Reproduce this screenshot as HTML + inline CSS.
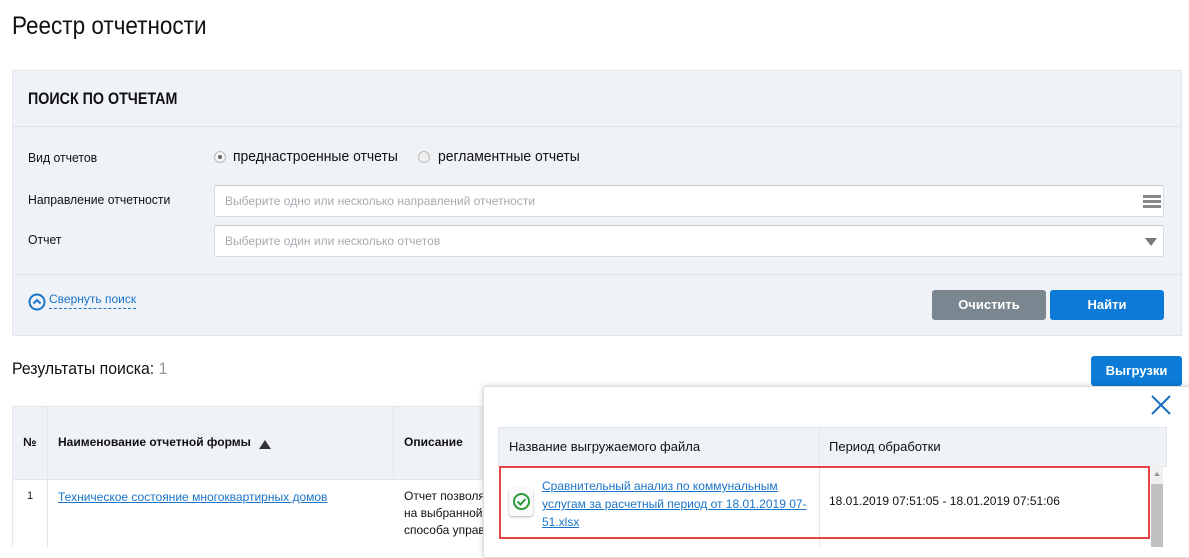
<!DOCTYPE html>
<html><head><meta charset="utf-8"><style>
body{margin:0;width:1189px;height:547px;overflow:hidden;background:#fff;font-family:"Liberation Sans",sans-serif;color:#111;position:relative}
.a{position:absolute}
.n{transform-origin:0 0;white-space:nowrap}
.t{font-size:13px;transform:scaleX(.94)}
.inp{position:absolute;left:214px;width:948px;height:30px;background:#fff;border:1px solid #d9dde3;border-top-color:#c4c8ce;border-radius:2px}
.ph{position:absolute;left:10px;top:8px;font-size:12px;color:#a6aab0}
.btn{position:absolute;color:#fff;font-size:13px;font-weight:bold;text-align:center;border-radius:3px}
</style></head><body>
<div class="a n" style="left:12px;top:12px;font-size:25px;transform:scaleX(.9)">Реестр отчетности</div>
<div class="a" style="left:12px;top:70px;width:1168px;height:264px;background:#eff2f7;border:1px solid #e2e6ec"></div>
<div class="a" style="left:13px;top:126px;width:1168px;height:1px;background:#dfe3e9"></div>
<div class="a" style="left:13px;top:274px;width:1168px;height:1px;background:#dfe3e9"></div>
<div class="a n" style="left:28px;top:89px;font-size:17px;font-weight:bold;transform:scaleX(.84)">ПОИСК ПО ОТЧЕТАМ</div>
<div class="a n t" style="left:28px;top:150px">Вид отчетов</div>
<div class="a" style="left:214px;top:151px;width:10px;height:10px;border:1px solid #bbb;border-radius:50%;background:#f4f4f4"><div style="position:absolute;left:3px;top:3px;width:4px;height:4px;border-radius:50%;background:#666"></div></div>
<div class="a n" style="left:233px;top:148px;font-size:15px;transform:scaleX(.93)">преднастроенные отчеты</div>
<div class="a" style="left:418px;top:151px;width:10px;height:10px;border:1px solid #bbb;border-radius:50%;background:#eee"></div>
<div class="a n" style="left:438px;top:148px;font-size:15px;transform:scaleX(.93)">регламентные отчеты</div>
<div class="a n t" style="left:28px;top:192px">Направление отчетности</div>
<div class="inp" style="top:185px"><div class="ph">Выберите одно или несколько направлений отчетности</div>
<div class="a" style="right:2px;top:9px;width:18px;height:3px;background:#888;box-shadow:0 5px 0 #888,0 10px 0 #888"></div></div>
<div class="a n t" style="left:28px;top:232px">Отчет</div>
<div class="inp" style="top:225px"><div class="ph">Выберите один или несколько отчетов</div>
<div class="a" style="right:6px;top:12px;border-left:6px solid transparent;border-right:6px solid transparent;border-top:8px solid #777"></div></div>
<svg class="a" style="left:28px;top:293px" width="18" height="18"><circle cx="9" cy="9" r="7.5" fill="none" stroke="#1a74c9" stroke-width="2"/><path d="M5.5 10.5 9 7 12.5 10.5" fill="none" stroke="#1a74c9" stroke-width="2"/></svg>
<div class="a" style="left:49px;top:292px;font-size:12px;color:#1a74c9;border-bottom:1px dashed #1a74c9;padding-bottom:2px">Свернуть поиск</div>
<div class="btn" style="left:932px;top:290px;width:114px;height:30px;line-height:30px;background:#7a8790">Очистить</div>
<div class="btn" style="left:1050px;top:290px;width:114px;height:30px;line-height:30px;background:#0b7bd7">Найти</div>
<div class="a n" style="left:12px;top:359px;font-size:17px;transform:scaleX(.93)">Результаты поиска: <span style="color:#999">1</span></div>
<div class="btn" style="left:1091px;top:356px;width:91px;height:30px;line-height:30px;background:#0b7bd7">Выгрузки</div>
<div class="a" style="left:12px;top:406px;width:480px;height:72px;background:#eff2f7;border:1px solid #e2e6ec"></div>
<div class="a" style="left:47px;top:406px;width:1px;height:141px;background:#e2e6ec"></div>
<div class="a" style="left:393px;top:406px;width:1px;height:72px;background:#e2e6ec"></div>
<div class="a" style="left:12px;top:478px;width:1px;height:69px;background:#e2e6ec"></div>
<div class="a" style="left:23px;top:435px;font-size:12px;font-weight:bold">№</div>
<div class="a" style="left:58px;top:435px;font-size:12px;font-weight:bold">Наименование отчетной формы</div>
<div class="a" style="left:259px;top:440px;border-left:6px solid transparent;border-right:6px solid transparent;border-bottom:9px solid #333"></div>
<div class="a" style="left:404px;top:435px;font-size:12px;font-weight:bold">Описание</div>
<div class="a" style="left:27px;top:490px;font-size:11px">1</div>
<div class="a" style="left:58px;top:490px;font-size:12px;color:#1a74c9;text-decoration:underline">Техническое состояние многоквартирных домов </div>
<div class="a" style="left:404px;top:488px;font-size:12px;line-height:17px;white-space:nowrap">Отчет позволя<br>на выбранной<br>способа управ</div>
<div class="a" style="left:483px;top:386px;width:720px;height:170px;background:#fff;border:1px solid #ddd;border-radius:3px;box-shadow:0 0 6px rgba(0,0,0,.2)"></div>
<svg class="a" style="left:1150px;top:394px" width="22" height="22"><path d="M2 2 20 20M20 2 2 20" stroke="#1a6fc0" stroke-width="2"/></svg>
<div class="a" style="left:498px;top:427px;width:667px;height:38px;background:#eff2f7;border:1px solid #e2e6ec"></div>
<div class="a" style="left:819px;top:427px;width:1px;height:120px;background:#e2e6ec"></div>
<div class="a" style="left:509px;top:439px;font-size:13px">Название выгружаемого файла</div>
<div class="a" style="left:829px;top:439px;font-size:13px">Период обработки</div>
<div class="a" style="left:1151px;top:466px;width:12px;height:81px;background:#f0f0f0"></div>
<div class="a" style="left:1151px;top:484px;width:12px;height:63px;background:#c1c1c1"></div>
<div class="a" style="left:1154px;top:472px;border-left:3px solid transparent;border-right:3px solid transparent;border-bottom:4px solid #999"></div>
<div class="a" style="left:499px;top:466px;width:647px;height:69px;border:2px solid #e44444"></div>
<div class="a" style="left:509px;top:488px;width:24px;height:28px;background:#fafafa;border-radius:3px;box-shadow:0 1px 2px rgba(0,0,0,.3)"></div>
<svg class="a" style="left:512px;top:492px" width="19" height="19"><circle cx="9.5" cy="9.5" r="7.5" fill="none" stroke="#2a9a3a" stroke-width="2"/><path d="M5.5 9.5 8.5 12.5 13.5 7" fill="none" stroke="#2a9a3a" stroke-width="2"/></svg>
<div class="a" style="left:542px;top:477px;font-size:12px;line-height:18px;color:#1a74c9;text-decoration:underline;white-space:nowrap">Сравнительный анализ по коммунальным<br>услугам за расчетный период от 18.01.2019 07-<br>51.xlsx</div>
<div class="a" style="left:829px;top:494px;font-size:12px">18.01.2019 07:51:05 - 18.01.2019 07:51:06</div>
</body></html>
